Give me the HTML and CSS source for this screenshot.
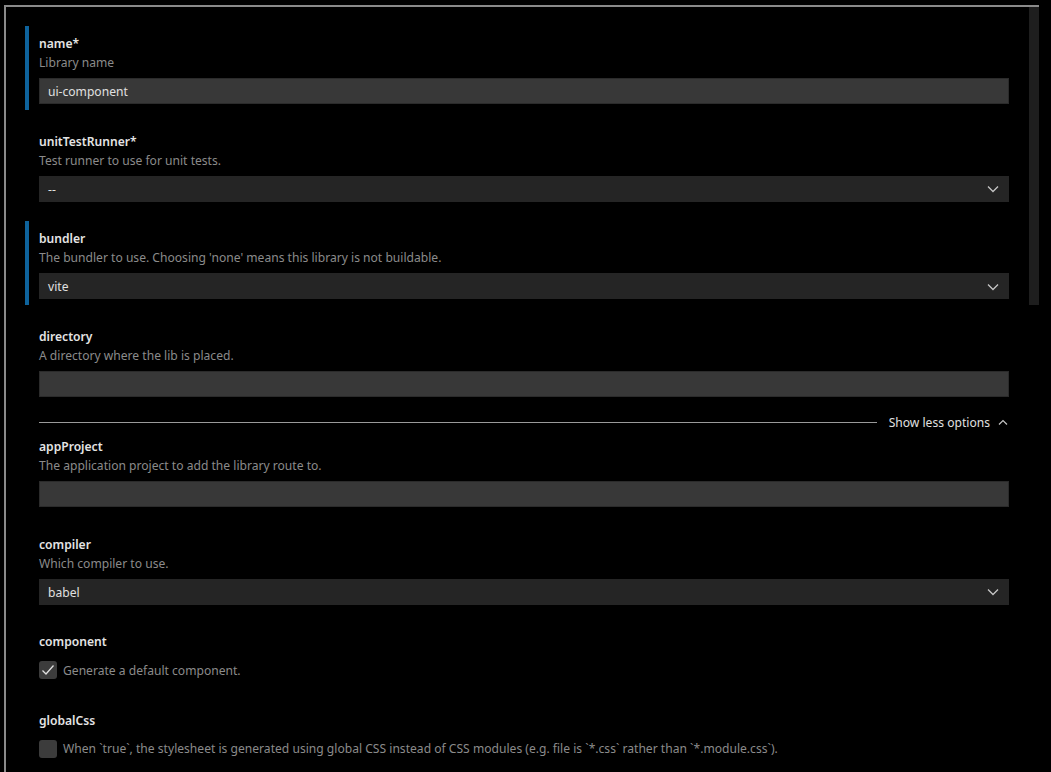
FILE: index.html
```html
<!DOCTYPE html>
<html lang="en">
<head>
  <meta charset="UTF-8">
  <title>Generate library</title>
  <link rel="stylesheet" href="styles.css">
</head>
<body>

  <div id="panel">
    <div class="scroll-thumb"></div>

    <div class="field active">
      <div class="label">name*</div>
      <div class="desc">Library name</div>
      <div class="input">ui-component</div>
    </div>

    <div class="field">
      <div class="label">unitTestRunner*</div>
      <div class="desc">Test runner to use for unit tests.</div>
      <div class="select">
        <span>--</span>
        <svg class="chev" width="12" height="8" viewBox="0 0 12 8"><path d="M1 1.5 L6 6.5 L11 1.5" fill="none" stroke="#c5c5c5" stroke-width="1.3"/></svg>
      </div>
    </div>

    <div class="field active">
      <div class="label">bundler</div>
      <div class="desc">The bundler to use. Choosing 'none' means this library is not buildable.</div>
      <div class="select">
        <span>vite</span>
        <svg class="chev" width="12" height="8" viewBox="0 0 12 8"><path d="M1 1.5 L6 6.5 L11 1.5" fill="none" stroke="#c5c5c5" stroke-width="1.3"/></svg>
      </div>
    </div>

    <div class="field">
      <div class="label">directory</div>
      <div class="desc">A directory where the lib is placed.</div>
      <div class="input"></div>
    </div>

    <div class="divider">
      <div class="line"></div>
      <span>Show less options</span>
      <svg width="10" height="7" viewBox="0 0 10 7"><path d="M1 5.5 L5 1.5 L9 5.5" fill="none" stroke="#c5c5c5" stroke-width="1.2"/></svg>
    </div>

    <div class="field">
      <div class="label">appProject</div>
      <div class="desc">The application project to add the library route to.</div>
      <div class="input"></div>
    </div>

    <div class="field">
      <div class="label">compiler</div>
      <div class="desc">Which compiler to use.</div>
      <div class="select">
        <span>babel</span>
        <svg class="chev" width="12" height="8" viewBox="0 0 12 8"><path d="M1 1.5 L6 6.5 L11 1.5" fill="none" stroke="#c5c5c5" stroke-width="1.3"/></svg>
      </div>
    </div>

    <div class="field check-field">
      <div class="label">component</div>
      <div class="check-row">
        <div class="box">
          <svg width="14" height="12" viewBox="0 0 14 12"><path d="M1.5 6.5 L5 10 L12.5 1.5" fill="none" stroke="#e0e0e0" stroke-width="1.3"/></svg>
        </div>
        <span>Generate a default component.</span>
      </div>
    </div>

    <div class="field check-field">
      <div class="label">globalCss</div>
      <div class="check-row">
        <div class="box"></div>
        <span>When `true`, the stylesheet is generated using global CSS instead of CSS modules (e.g. file is `*.css` rather than `*.module.css`).</span>
      </div>
    </div>
  </div>

</body>
</html>
```

FILE: styles.css
```css
body {
  margin: 0;
  background: #000;
  font-family: 'Noto Sans', 'Open Sans', sans-serif;
  font-size: 12.1px;
  color: #cccccc;
  overflow: hidden;
}

#panel {
  position: relative;
  margin-top: 5px;
  margin-left: 4px;
  width: 1035px;
  height: 800px;
  box-sizing: border-box;
  border-top: 2px solid #8a8a8a;
  border-left: 2px solid #8a8a8a;
  padding: 19px 30px 0 19px;
}

.scroll-thumb {
  position: absolute;
  top: 0;
  right: 0;
  width: 10px;
  height: 298px;
  background: #1e1e1e;
}

.field {
  padding: 8px 0 6px 10px;
  margin-bottom: 13.5px;
  border-left: 4px solid transparent;
}

.field.active {
  border-left-color: #0e639c;
}

.label {
  height: 17px;
  padding-top: 1px;
  line-height: 18px;
  color: #e4e4e4;
  font-weight: 600;
}

.desc {
  height: 19px;
  padding-top: 1px;
  line-height: 20px;
  color: #8b8b8b;
  margin-bottom: 6px;
}

.input {
  height: 26px;
  line-height: 25px;
  box-sizing: border-box;
  background: #383838;
  border: 1px solid #2b2b2b;
  padding: 0 8px;
  color: #e0e0e0;
}

.select {
  height: 26px;
  box-sizing: border-box;
  background: #252525;
  padding: 1px 10px 0 9px;
  display: flex;
  align-items: center;
  justify-content: space-between;
  color: #e0e0e0;
}

.divider {
  height: 13px;
  margin-top: -13.5px;
  padding: 13.5px 0 0 14px;
  display: flex;
  align-items: center;
  gap: 12px;
  color: #e0e0e0;
}

.divider .line {
  flex: 1;
  height: 1px;
  background: #9a9a9a;
}

.divider span {
  margin-right: -4px;
}

.divider svg {
  margin-right: 1px;
}

.check-field {
  padding-bottom: 10px;
}

.check-row {
  margin-top: 11px;
  height: 18px;
  display: flex;
  align-items: center;
  gap: 6px;
  color: #8b8b8b;
}

.box {
  width: 18px;
  height: 18px;
  box-sizing: border-box;
  border-radius: 3px;
  background: #3c3c3c;
  display: flex;
  align-items: center;
  justify-content: center;
}
```
